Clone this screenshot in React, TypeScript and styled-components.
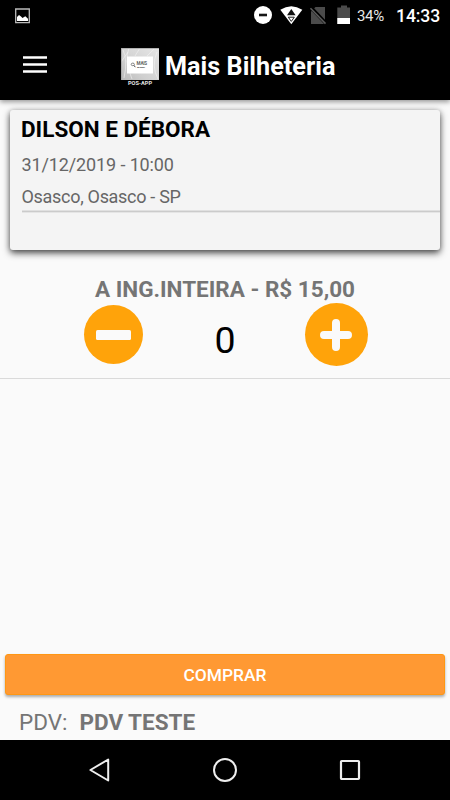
import React from "react";
import styled, { createGlobalStyle } from "styled-components";

const GlobalStyle = createGlobalStyle`
  * { box-sizing: border-box; }
  body { margin: 0; background: #fafafa; font-family: Roboto, "Liberation Sans", sans-serif; }
  svg { display: block; flex: none; }
`;

const Screen = styled.div`
  display: flex;
  flex-direction: column;
  width: 450px;
  height: 800px;
  overflow: hidden;
  background: #fafafa;
`;

const StatusBar = styled.div`
  display: flex;
  align-items: center;
  justify-content: space-between;
  flex: none;
  height: 32px;
  padding: 0 10px 0 14px;
  background: #000;
  color: #fff;
  position: relative;
  z-index: 1;
`;

const StatusGroup = styled.div`
  display: flex;
  align-items: center;
`;

const Battery = styled.span`
  width: 39px;
  margin-left: 6px;
  font-size: 15px;
  line-height: 32px;
  letter-spacing: -0.35px;
  color: #e8e8e8;
`;

const Clock = styled.span`
  width: 44px;
  font-size: 17.6px;
  font-weight: 500;
  line-height: 32px;
  letter-spacing: -0.1px;
`;

const AppBar = styled.header`
  display: flex;
  flex: none;
  align-items: flex-start;
  height: 68px;
  padding-left: 23px;
  background: #000;
  color: #fff;
  box-shadow: 0 2px 5px rgba(0, 0, 0, 0.4);
`;

const MenuButton = styled.button`
  width: 24px;
  height: 18px;
  margin: 24px 74px 0 0;
  padding: 0;
  border: 0;
  background: none;
`;

const Logo = styled.div`
  display: flex;
  flex-direction: column;
  align-items: center;
  width: 38px;
  margin-top: 16px;
`;

const LogoCaption = styled.span`
  font-size: 5.6px;
  font-weight: 700;
  line-height: 6px;
  color: #e6e6e6;
`;

const AppTitle = styled.h1`
  margin: 20px 0 0 6px;
  font-size: 25.2px;
  font-weight: 700;
  line-height: 30px;
  letter-spacing: 0.03px;
  white-space: nowrap;
`;

const EventCard = styled.section`
  flex: none;
  height: 140px;
  margin: 10px 10px 0;
  padding: 4px 0 0 12px;
  border-radius: 3px;
  background: #f4f4f4;
  box-shadow: 0 3px 7px rgba(0, 0, 0, 0.7), 0 0 5px rgba(0, 0, 0, 0.15);
`;

const EventName = styled.h2`
  margin: 0 0 1px -1px;
  font-size: 22.5px;
  font-weight: 700;
  line-height: 30px;
  color: #000;
`;

const EventDetail = styled.p`
  margin: 0 0 0 -0.5px;
  padding-top: 6px;
  font-size: 18px;
  line-height: 27px;
  letter-spacing: -0.12px;
  color: #666;
`;

const Venue = styled(EventDetail)`
  height: 36px;
  margin-top: -2px;
  padding-top: 7px;
  letter-spacing: -0.3px;
`;

const CardDivider = styled.div`
  height: 3px;
  margin-top: -2px;
  background: #e5e5e5;
  border-top: 1px solid #e0e0e0;
  box-shadow: inset 0 1px 0 #cbcbcb;
`;

const Ticket = styled.section`
  flex: none;
  height: 129px;
  padding-top: 24px;
  border-bottom: 1px solid #dadada;
`;

const TicketName = styled.h3`
  margin: 0;
  font-size: 22.5px;
  font-weight: 700;
  line-height: 30px;
  text-align: center;
  color: #757575;
`;

const Stepper = styled.div`
  display: flex;
  align-items: center;
  justify-content: space-between;
  height: 64px;
  padding: 0 82px 0 84px;
  margin-top: -1px;
`;

const RoundButton = styled.button<{ $size: number }>`
  display: grid;
  place-items: center;
  width: ${(p) => p.$size}px;
  height: ${(p) => p.$size}px;
  padding: 0;
  border: 0;
  border-radius: 50%;
  background: #ffa30a;
  margin-top: -1px;
`;

const Quantity = styled.span`
  padding: 9px 0 0 2px;
  font-size: 37.5px;
  line-height: 44px;
  color: #000;
`;

const BuyButton = styled.button`
  flex: none;
  height: 41px;
  margin: auto 5px 0;
  padding: 0;
  border: 1px solid #ff9713;
  border-radius: 3px;
  background: #ff9933;
  box-shadow: 0 2px 3px rgba(0, 0, 0, 0.32);
  color: #fff;
  font-family: inherit;
  font-size: 17.4px;
  font-weight: 500;
  line-height: 24px;
`;

const SalesPoint = styled.footer`
  display: flex;
  flex: none;
  gap: 12px;
  height: 45px;
  padding: 12px 0 0 19px;
  font-size: 22.5px;
  line-height: 30px;
  color: #757575;
`;

const NavigationBar = styled.nav`
  display: flex;
  flex: none;
  align-items: center;
  justify-content: center;
  gap: 101px;
  height: 60px;
  padding-right: 2px;
  background: #000;
`;

function StatusIcons() {
  return (
    <svg width="98" height="32" viewBox="253 0 98 32">
      <circle cx="263" cy="15" r="9" fill="#fff" />
      <path d="M259 15h8" stroke="#161616" strokeWidth="2.6" />
      <path d="M280.3 9.8Q291.3 2.6 302.3 9.8L291.3 24.3Z" fill="#fff" />
      <path d="M291.3 9L295.6 15.3H287Z" fill="#111" />
      <path d="M288.3 17.2H294.3L291.3 21.4Z" fill="#fff" stroke="#222" />
      <path d="M315.5 7H325V24H311V11.5Z" fill="#4b4b4b" />
      <path d="M310.5 7L326.5 24" stroke="#000" strokeWidth="3.5" />
      <path d="M310.5 8.3L325.5 23.6" stroke="#5c5c5c" strokeWidth="1.5" />
      <path d="M341 5.5h6v2h3V24h-12.7V7.5h3.7Z" fill="#4b4b4b" />
      <path d="M337.3 18H350v6h-12.7Z" fill="#fff" />
    </svg>
  );
}

function LogoMark() {
  return (
    <svg width="38" height="32" viewBox="0 0 38 32">
      <defs>
        <linearGradient id="logo-shade" x1="0" y1="1" x2="1" y2="0">
          <stop offset="0" stopColor="#b9b9b9" />
          <stop offset=".35" stopColor="#d0d0d0" />
          <stop offset="1" stopColor="#e6e6e6" />
        </linearGradient>
      </defs>
      <path d="M0 0h38v32H0z" fill="url(#logo-shade)" />
      <path d="M2 2Q7 12 3 30M8 0Q3 12 11 31M19 0l-5 8M33 1l-7 7M36 4Q30 18 37 31M0 14l7-10" fill="none" stroke="#f3f3f3" strokeOpacity=".6" strokeWidth="1" />
      <path d="M0 .5h38M.5 0v32" stroke="#a7a7a7" strokeWidth=".8" />
      <path d="M6 8.5h26v17H6z" fill="#fff" />
      <ellipse cx="11.8" cy="16.4" rx="1.6" ry="1.3" fill="none" stroke="#777" strokeWidth=".9" />
      <path d="M13 17.8l1.4 1" stroke="#333" />
      <text x="15.6" y="17.4" fontSize="4.6" fontWeight="700" fill="#666" textLength="10.5">MAIS</text>
      <text x="16" y="19.6" fontSize="2.3" fontWeight="700" fill="#555" textLength="8">BILHETERIA</text>
    </svg>
  );
}

export default function App() {
  return (
    <>
      <GlobalStyle />
      <Screen>
        <StatusBar>
          <svg width="17" height="18" viewBox="0 0 17 18">
            <path d="M1.7 2h13.6v13.6H1.7z" fill="none" stroke="#bbb" strokeWidth="1.3" />
            <path d="M3 14V10l2-2 2 1.4 1.5 1.7 2.8-1.8 2.7 2.4V14z" fill="#fff" />
          </svg>
          <StatusGroup>
            <StatusIcons />
            <Battery>34%</Battery>
            <Clock>14:33</Clock>
          </StatusGroup>
        </StatusBar>
        <AppBar>
          <MenuButton aria-label="Menu">
            <svg width="24" height="18" viewBox="0 0 24 18">
              <path d="M0 1.5h24M0 8.5h24M0 15.5h24" stroke="#fff" strokeWidth="2.6" />
            </svg>
          </MenuButton>
          <Logo>
            <LogoMark />
            <LogoCaption>POS-APP</LogoCaption>
          </Logo>
          <AppTitle>Mais Bilheteria</AppTitle>
        </AppBar>
        <EventCard>
          <EventName>DILSON E DÉBORA</EventName>
          <EventDetail>31/12/2019 - 10:00</EventDetail>
          <Venue>Osasco, Osasco - SP</Venue>
          <CardDivider />
        </EventCard>
        <Ticket>
          <TicketName>A ING.INTEIRA - R$ 15,00</TicketName>
          <Stepper>
            <RoundButton $size={59} aria-label="Diminuir">
              <svg width="35" height="10" viewBox="0 0 35 10">
                <rect width="35" height="10" rx="1.5" fill="#fafafa" />
              </svg>
            </RoundButton>
            <Quantity>0</Quantity>
            <RoundButton $size={63} aria-label="Aumentar">
              <svg width="32" height="32" viewBox="0 0 32 32">
                <path d="M4 16h24M16 4v24" stroke="#fafafa" strokeWidth="8" strokeLinecap="round" />
              </svg>
            </RoundButton>
          </Stepper>
        </Ticket>
        <BuyButton>COMPRAR</BuyButton>
        <SalesPoint>
          <span>PDV:</span>
          <strong>PDV TESTE</strong>
        </SalesPoint>
        <NavigationBar>
          <svg width="24" height="26" viewBox="0 0 24 26">
            <path d="M3.4 13L21.2 2.5v21z" fill="none" stroke="#eee" strokeWidth="2" strokeLinejoin="round" />
          </svg>
          <svg width="26" height="26" viewBox="0 0 26 26">
            <circle cx="13" cy="13" r="11" fill="none" stroke="#eee" strokeWidth="2" />
          </svg>
          <svg width="22" height="22" viewBox="0 0 22 22">
            <rect x="2" y="2" width="18" height="18" rx=".7" fill="none" stroke="#eee" strokeWidth="2.2" />
          </svg>
        </NavigationBar>
      </Screen>
    </>
  );
}
